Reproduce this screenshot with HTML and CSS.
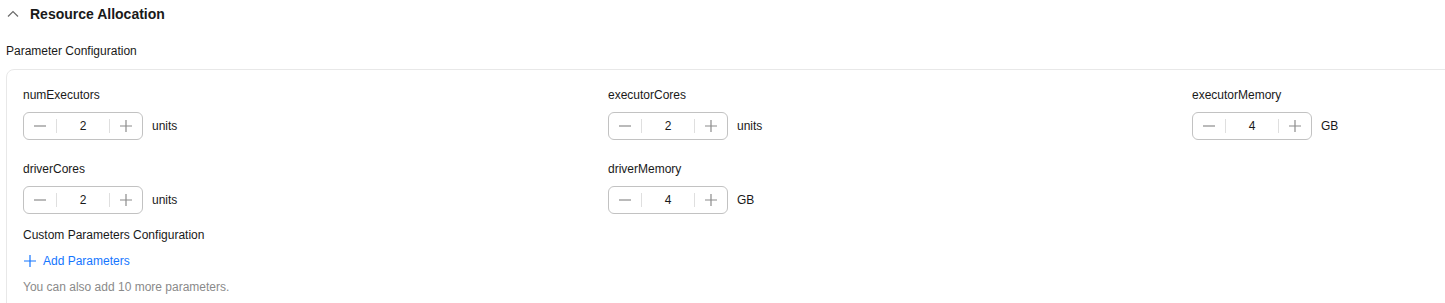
FILE: index.html
```html
<!DOCTYPE html>
<html>
<head>
<meta charset="utf-8">
<link rel="stylesheet" href="styles.css">
</head>
<body>
<div class="header">
  <svg class="chev" width="12" height="12" viewBox="0 0 12 12"><path d="M1 8.5 L6 3.5 L11 8.5" fill="none" stroke="#6b6b6b" stroke-width="1.2"/></svg>
  <span class="title">Resource Allocation</span>
</div>
<div class="section-label">Parameter Configuration</div>
<div class="card">
  <div class="grid">
    <div class="field">
      <div class="label">numExecutors</div>
      <div class="row">
        <div class="stepper"><span class="btn"><svg width="12" height="12" viewBox="0 0 12 12"><path d="M0 6H12" stroke="#8c8c8c" stroke-width="1.2"/></svg></span><span class="val">2</span><span class="btn r"><svg width="12" height="12" viewBox="0 0 12 12"><path d="M0 6H12M6 0V12" stroke="#8c8c8c" stroke-width="1.2"/></svg></span></div>
        <span class="unit">units</span>
      </div>
    </div>
    <div class="field">
      <div class="label">executorCores</div>
      <div class="row">
        <div class="stepper"><span class="btn"><svg width="12" height="12" viewBox="0 0 12 12"><path d="M0 6H12" stroke="#8c8c8c" stroke-width="1.2"/></svg></span><span class="val">2</span><span class="btn r"><svg width="12" height="12" viewBox="0 0 12 12"><path d="M0 6H12M6 0V12" stroke="#8c8c8c" stroke-width="1.2"/></svg></span></div>
        <span class="unit">units</span>
      </div>
    </div>
    <div class="field">
      <div class="label">executorMemory</div>
      <div class="row">
        <div class="stepper"><span class="btn"><svg width="12" height="12" viewBox="0 0 12 12"><path d="M0 6H12" stroke="#8c8c8c" stroke-width="1.2"/></svg></span><span class="val">4</span><span class="btn r"><svg width="12" height="12" viewBox="0 0 12 12"><path d="M0 6H12M6 0V12" stroke="#8c8c8c" stroke-width="1.2"/></svg></span></div>
        <span class="unit">GB</span>
      </div>
    </div>
    <div class="field">
      <div class="label">driverCores</div>
      <div class="row">
        <div class="stepper"><span class="btn"><svg width="12" height="12" viewBox="0 0 12 12"><path d="M0 6H12" stroke="#8c8c8c" stroke-width="1.2"/></svg></span><span class="val">2</span><span class="btn r"><svg width="12" height="12" viewBox="0 0 12 12"><path d="M0 6H12M6 0V12" stroke="#8c8c8c" stroke-width="1.2"/></svg></span></div>
        <span class="unit">units</span>
      </div>
    </div>
    <div class="field">
      <div class="label">driverMemory</div>
      <div class="row">
        <div class="stepper"><span class="btn"><svg width="12" height="12" viewBox="0 0 12 12"><path d="M0 6H12" stroke="#8c8c8c" stroke-width="1.2"/></svg></span><span class="val">4</span><span class="btn r"><svg width="12" height="12" viewBox="0 0 12 12"><path d="M0 6H12M6 0V12" stroke="#8c8c8c" stroke-width="1.2"/></svg></span></div>
        <span class="unit">GB</span>
      </div>
    </div>
  </div>
  <div class="custom-label">Custom Parameters Configuration</div>
  <div class="add"><svg width="12" height="12" viewBox="0 0 12 12"><path d="M0 6H12M6 0V12" stroke="#1476ff" stroke-width="1.2"/></svg><span>Add Parameters</span></div>
  <div class="hint">You can also add 10 more parameters.</div>
</div>
</body>
</html>
```
FILE: styles.css
```css
html, body {
  margin: 0;
  padding: 0;
  background: #fff;
  overflow: hidden;
}
body {
  font-family: "Liberation Sans", Arial, sans-serif;
  font-size: 12px;
  color: #191919;
  width: 1445px;
  height: 303px;
}
.header {
  display: flex;
  align-items: center;
  height: 28px;
  padding-left: 7px;
}
.chev {
  display: block;
  margin-right: 11px;
}
.title {
  font-size: 14px;
  font-weight: bold;
  color: #191919;
}
.section-label {
  margin-top: 14px;
  line-height: 18px;
  padding-left: 6px;
}
.card {
  margin-top: 9px;
  margin-left: 6px;
  width: 1700px;
  border: 1px solid #e8e8e8;
  border-radius: 8px;
  padding: 16px 16px 20px 16px;
}
.grid {
  display: grid;
  grid-template-columns: 561px 560px 561px;
  column-gap: 24px;
  row-gap: 20px;
}
.label {
  line-height: 18px;
  margin-bottom: 8px;
}
.row {
  display: flex;
  align-items: center;
}
.stepper {
  display: flex;
  align-items: center;
  width: 118px;
  height: 26px;
  border: 1px solid #c2c2c2;
  border-radius: 6px;
}
.btn {
  width: 32px;
  height: 14px;
  display: flex;
  align-items: center;
  justify-content: center;
  border-right: 1px solid #dfdfdf;
}
.btn.r {
  border-right: none;
  border-left: 1px solid #dfdfdf;
}
.val {
  flex: 1;
  text-align: center;
  color: #191919;
}
.unit {
  margin-left: 9px;
}
.custom-label {
  margin-top: 12px;
  line-height: 18px;
}
.add {
  margin-top: 8px;
  line-height: 18px;
  display: flex;
  align-items: center;
  color: #1476ff;
}
.add svg {
  margin-right: 7px;
  margin-left: 1px;
}
.hint {
  margin-top: 8px;
  line-height: 18px;
  color: #8a8a8a;
}
```
